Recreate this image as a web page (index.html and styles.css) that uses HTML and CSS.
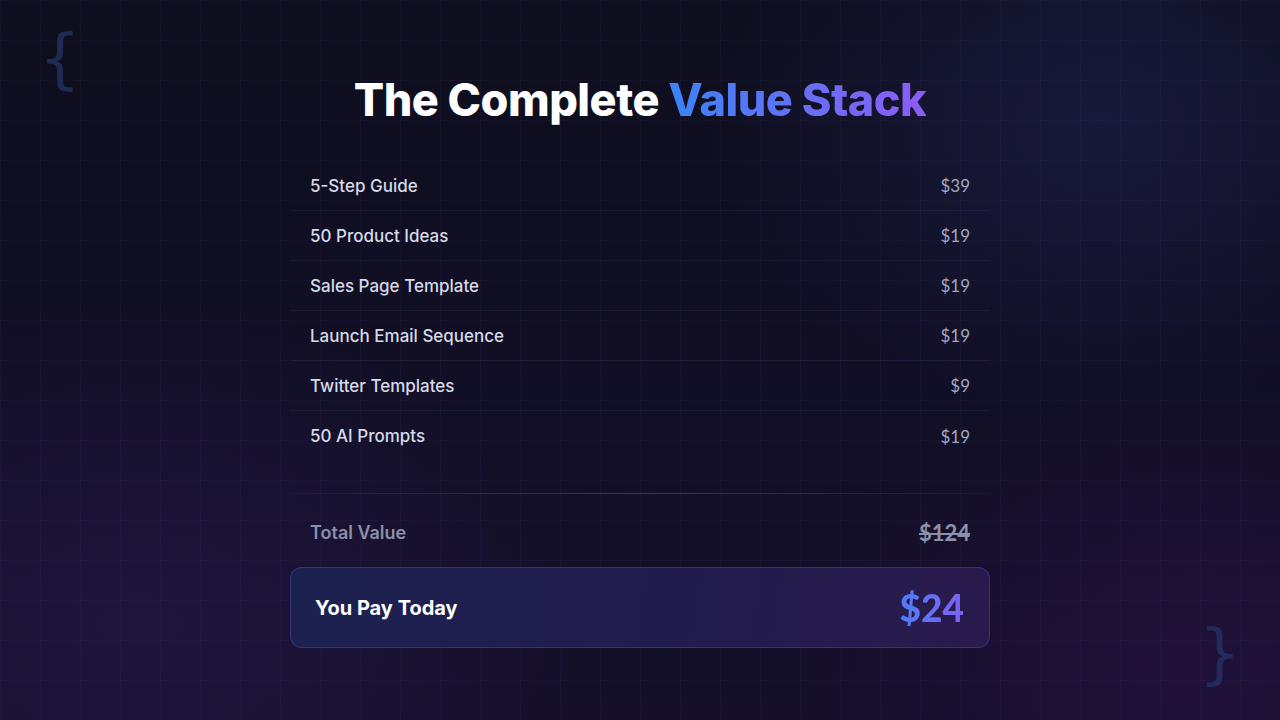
FILE: index.html
```html
<!DOCTYPE html>
<html lang="en">
<head>
<meta charset="utf-8">
<title>The Complete Value Stack</title>
<link rel="stylesheet" href="styles.css">
</head>
<body>
<div class="page">
  <div class="grid"></div>
  <span class="brace brace-open">{</span>
  <span class="brace brace-close">}</span>
  <main class="content">
    <h1 class="title">The Complete <span class="accent">Value Stack</span></h1>
    <ul class="items">
      <li class="item"><span class="item-name">5-Step Guide</span><span class="price">$39</span></li>
      <li class="item"><span class="item-name">50 Product Ideas</span><span class="price">$19</span></li>
      <li class="item"><span class="item-name">Sales Page Template</span><span class="price">$19</span></li>
      <li class="item"><span class="item-name">Launch Email Sequence</span><span class="price">$19</span></li>
      <li class="item"><span class="item-name">Twitter Templates</span><span class="price">$9</span></li>
      <li class="item"><span class="item-name">50 AI Prompts</span><span class="price">$19</span></li>
    </ul>
    <div class="divider"></div>
    <div class="total">
      <span class="total-label">Total Value</span>
      <span class="total-price">$124</span>
    </div>
    <div class="pay">
      <span class="pay-label">You Pay Today</span>
      <span class="pay-price">$24</span>
    </div>
  </main>
</div>
</body>
</html>
```
FILE: styles.css
```css
* { box-sizing: border-box; margin: 0; padding: 0; }
html, body { width: 1280px; height: 720px; overflow: hidden; }
body {
  font-family: "Inter", "Noto Sans", sans-serif;
  background: #0e0d1e;
  color: #fff;
}
.page {
  position: relative;
  width: 1280px;
  height: 720px;
  overflow: hidden;
  background:
    radial-gradient(ellipse 560px 420px at 1100px 120px, rgba(38, 42, 100, 0.38), transparent 70%),
    radial-gradient(ellipse 620px 440px at 140px 620px, rgba(50, 30, 95, 0.38), transparent 72%),
    radial-gradient(ellipse 600px 400px at 1200px 660px, rgba(50, 18, 80, 0.4), transparent 70%),
    linear-gradient(180deg, #0e0e1e 0%, #120f26 60%, #150f2a 100%);
}
.grid {
  position: absolute;
  inset: 0;
  background-image:
    linear-gradient(to right, rgba(120, 110, 200, 0.055) 1px, transparent 1px),
    linear-gradient(to bottom, rgba(120, 110, 200, 0.055) 1px, transparent 1px);
  background-size: 40px 40px;
  pointer-events: none;
}
.brace {
  position: absolute;
  font-family: "DejaVu Sans Mono", monospace;
  font-size: 66px;
  line-height: 1;
  color: #1e2b52;
}
.brace-open { left: 40px; top: 26px; }
.brace-close { left: 1200px; top: 621px; color: #232a5c; }
.content {
  position: relative;
  width: 700px;
  margin: 0 auto;
  padding-top: 71px;
}
.title {
  font-size: 45px;
  font-weight: 800;
  letter-spacing: -0.5px;
  line-height: 58px;
  text-align: center;
  color: #ffffff;
}
.accent {
  background: linear-gradient(90deg, #3b82f6 0%, #6d6cf4 60%, #8b5cf6 100%);
  -webkit-background-clip: text;
  background-clip: text;
  color: transparent;
}
.items {
  list-style: none;
  margin-top: 32px;
}
.item {
  display: flex;
  justify-content: space-between;
  align-items: center;
  height: 50px;
  padding: 0 20px;
  border-bottom: 1px solid rgba(120, 120, 190, 0.1);
}
.item:last-child { border-bottom: none; }
.item-name {
  font-size: 17px;
  font-weight: 500;
  color: #d6dae8;
}
.price {
  font-family: "Lato", sans-serif;
  font-size: 17px;
  font-weight: 400;
  color: #a0a8c2;
}
.divider {
  height: 1px;
  margin-top: 32px;
  background: linear-gradient(90deg, rgba(80, 90, 170, 0.1), rgba(90, 100, 190, 0.45) 50%, rgba(80, 90, 170, 0.1));
}
.total {
  display: flex;
  justify-content: space-between;
  align-items: center;
  height: 73px;
  padding: 3px 20px 0;
}
.total-label {
  font-size: 18px;
  font-weight: 600;
  color: #8a90ab;
}
.total-price {
  font-family: "Lato", sans-serif;
  font-size: 22px;
  font-weight: 700;
  color: #8a90ab;
  text-decoration: line-through;
  text-decoration-thickness: 2px;
}
.pay {
  display: flex;
  justify-content: space-between;
  align-items: center;
  height: 81px;
  padding: 0 25px 0 24px;
  border: 1px solid rgba(80, 100, 200, 0.35);
  border-radius: 12px;
  background: linear-gradient(100deg, #1c2250 0%, #221c4e 55%, #2a1a4c 100%);
}
.pay-label {
  font-size: 20px;
  font-weight: 700;
  color: #ffffff;
}
.pay-price {
  font-family: "Lato", sans-serif;
  font-size: 37px;
  font-weight: 900;
  background: linear-gradient(90deg, #4f7cf6 0%, #7b63f2 100%);
  -webkit-background-clip: text;
  background-clip: text;
  color: transparent;
}
```
